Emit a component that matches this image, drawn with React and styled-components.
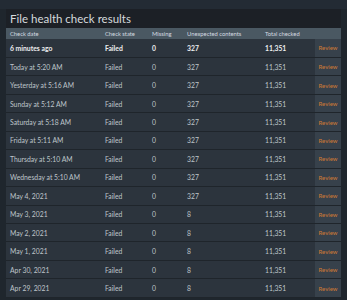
import * as React from "react";
import styled, { createGlobalStyle } from "styled-components";

const rows = [
  { date: "6 minutes ago", unexpected: "327", bold: true },
  { date: "Today at 5:20 AM", unexpected: "327" },
  { date: "Yesterday at 5:16 AM", unexpected: "327" },
  { date: "Sunday at 5:12 AM", unexpected: "327" },
  { date: "Saturday at 5:18 AM", unexpected: "327" },
  { date: "Friday at 5:11 AM", unexpected: "327" },
  { date: "Thursday at 5:10 AM", unexpected: "327" },
  { date: "Wednesday at 5:10 AM", unexpected: "327" },
  { date: "May 4, 2021", unexpected: "327" },
  { date: "May 3, 2021", unexpected: "8" },
  { date: "May 2, 2021", unexpected: "8" },
  { date: "May 1, 2021", unexpected: "8" },
  { date: "Apr 30, 2021", unexpected: "8" },
  { date: "Apr 29, 2021", unexpected: "8" },
];

export default function App() {
  return (
    <Page>
      <GlobalStyle />
      <TopStrip />
      <Panel>
        <Title>File health check results</Title>
        <Table>
          <colgroup>
            <col style={{ width: 95 }} />
            <col style={{ width: 47 }} />
            <col style={{ width: 35 }} />
            <col style={{ width: 78 }} />
            <col style={{ width: 54 }} />
            <col style={{ width: 26 }} />
          </colgroup>
          <thead>
            <HeaderRow>
              <Th>Check date</Th>
              <Th>Check state</Th>
              <Th>Missing</Th>
              <Th>Unexpected contents</Th>
              <Th>Total checked</Th>
              <Th />
            </HeaderRow>
          </thead>
          <tbody>
            {rows.map((r) => (
              <DataRow key={r.date} $bold={r.bold}>
                <Td>{r.date}</Td>
                <Td>Failed</Td>
                <Td>0</Td>
                <Td>{r.unexpected}</Td>
                <Td>11,351</Td>
                <ReviewCell>Review</ReviewCell>
              </DataRow>
            ))}
          </tbody>
        </Table>
      </Panel>
    </Page>
  );
}

const GlobalStyle = createGlobalStyle`
  body {
    margin: 0;
    background: #1f262d;
    font-family: Lato, "Open Sans", sans-serif;
  }
`;

const Page = styled.div`
  width: 347px;
  height: 300px;
  overflow: hidden;
  background: #1f262d;
  padding: 0 6px;
  box-sizing: border-box;
`;

const TopStrip = styled.div`
  height: 9px;
  background: #232b34;
  margin: 0 -6px;
`;

const Panel = styled.div`
  width: 335px;
  background: #2c343d;
`;

const Title = styled.div`
  height: 19px;
  background: #1c2026;
  color: #d6dadd;
  font-size: 11.5px;
  line-height: 19px;
  padding-left: 4px;
`;

const Table = styled.table`
  width: 335px;
  table-layout: fixed;
  border-collapse: collapse;
`;

const HeaderRow = styled.tr`
  height: 11px;
  background: #4a5862;
`;

const Th = styled.th`
  text-align: left;
  font-weight: 400;
  font-size: 5.8px;
  color: #d5dbe0;
  padding: 0 0 0 4px;
  line-height: 11px;
  white-space: nowrap;
  overflow: hidden;
`;

const DataRow = styled.tr`
  height: 18.46px;
  border-bottom: 1px solid #1f252b;
  color: ${(p) => (p.$bold ? "#eceef0" : "#bfc5ca")};
  font-weight: ${(p) => (p.$bold ? 700 : 400)};
`;

const Td = styled.td`
  font-size: 6.8px;
  padding: 0 0 0 4px;
  white-space: nowrap;
  overflow: hidden;
`;

const ReviewCell = styled.td`
  background: #37414b;
  color: #d07a35;
  font-size: 6px;
  font-weight: 400;
  text-align: center;
  padding: 0;
`;
